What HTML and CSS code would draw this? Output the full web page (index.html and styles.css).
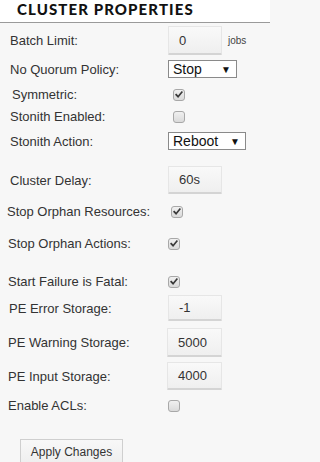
FILE: index.html
```html
<!DOCTYPE html>
<html>
<head>
<meta charset="utf-8">
<link rel="stylesheet" href="styles.css">
</head>
<body>
<div class="panel">
  <div class="header"><h1 class="title">CLUSTER PROPERTIES</h1></div>
  <div class="body">
    <div class="row r1 ind10"><span class="label">Batch Limit:</span><div class="ctl"><span class="input h29">0</span><span class="unit">jobs</span></div></div>
    <div class="row r2 ind10"><span class="label">No Quorum Policy:</span><div class="ctl"><span class="select w69">Stop<span class="arrow">&#9660;</span></span></div></div>
    <div class="row r3 ind12"><span class="label">Symmetric:</span><div class="ctl cb-ctl"><span class="checkbox checked"><svg viewBox="0 0 12 12" class="tick"><path d="M2.6 6.2 L4.9 8.6 L9.4 3.2" /></svg></span></div></div>
    <div class="row r4 ind10"><span class="label">Stonith Enabled:</span><div class="ctl cb-ctl"><span class="checkbox"></span></div></div>
    <div class="row r5 ind10"><span class="label">Stonith Action:</span><div class="ctl"><span class="select w78">Reboot<span class="arrow">&#9660;</span></span></div></div>
    <div class="row r6 ind10"><span class="label">Cluster Delay:</span><div class="ctl"><span class="input h28">60s</span></div></div>
    <div class="row r7 ind7"><span class="label">Stop Orphan Resources:</span><div class="ctl cb-ctl2"><span class="checkbox checked"><svg viewBox="0 0 12 12" class="tick"><path d="M2.6 6.2 L4.9 8.6 L9.4 3.2" /></svg></span></div></div>
    <div class="row r8 ind8"><span class="label">Stop Orphan Actions:</span><div class="ctl cb-ctl2"><span class="checkbox checked"><svg viewBox="0 0 12 12" class="tick"><path d="M2.6 6.2 L4.9 8.6 L9.4 3.2" /></svg></span></div></div>
    <div class="row r9 ind8"><span class="label">Start Failure is Fatal:</span><div class="ctl cb-ctl2"><span class="checkbox checked"><svg viewBox="0 0 12 12" class="tick"><path d="M2.6 6.2 L4.9 8.6 L9.4 3.2" /></svg></span></div></div>
    <div class="row r10 ind9"><span class="label">PE Error Storage:</span><div class="ctl"><span class="input h26">-1</span></div></div>
    <div class="row r11 ind8"><span class="label">PE Warning Storage:</span><div class="ctl ctl167"><span class="input h29 w55">5000</span></div></div>
    <div class="row r12 ind8"><span class="label">PE Input Storage:</span><div class="ctl ctl167"><span class="input h28 w55">4000</span></div></div>
    <div class="row r13 ind8"><span class="label">Enable ACLs:</span><div class="ctl cb-ctl2"><span class="checkbox"></span></div></div>
    <div class="actions"><span class="button">Apply Changes</span></div>
  </div>
</div>
</body>
</html>
```

FILE: styles.css
```css
html, body {
  margin: 0;
  padding: 0;
  background: #f7f7f7;
}
body {
  font-family: "Liberation Sans", Arial, sans-serif;
  color: #333;
  width: 270px;
  height: 462px;
  overflow: hidden;
}
.panel {
  display: flex;
  flex-direction: column;
}
.header {
  background: #fff;
  height: 22px;
  border-bottom: 1px solid #9a9a9a;
  display: flex;
  align-items: center;
  padding-left: 17px;
}
.title {
  margin: 0;
  font-family: "Lato", sans-serif;
  font-weight: 900;
  font-size: 15px;
  letter-spacing: 1.1px;
  color: #111;
  line-height: 1;
  position: relative;
  top: -2px;
}
.body {
  display: flex;
  flex-direction: column;
}
.row {
  display: flex;
  align-items: center;
}
.label {
  box-sizing: border-box;
  width: 168px;
  font-size: 13px;
  color: #333;
  line-height: 1;
}
.ind7 .label { width: 171px; padding-left: 7px; }
.ind8 .label { padding-left: 8px; }
.ind9 .label { padding-left: 9px; }
.ind10 .label { padding-left: 10px; }
.ind12 .label { padding-left: 12px; }
.ctl {
  display: flex;
  align-items: center;
}
.ctl167 { margin-left: -1px; }
.cb-ctl { padding-left: 5px; }
.cb-ctl2 { padding-left: 0; }

.r1 { margin-top: 3px; height: 29px; }
.r2 { margin-top: 5px; height: 18px; }
.r3 { margin-top: 10px; height: 13px; }
.r4 { margin-top: 9px; height: 13px; }
.r5 { margin-top: 9px; height: 18px; }
.r6 { margin-top: 16px; height: 28px; }
.r7 { margin-top: 11px; height: 13px; }
.r8 { margin-top: 19px; height: 13px; }
.r9 { margin-top: 25px; height: 13px; }
.r10 { margin-top: 7px; height: 26px; }
.r11 { margin-top: 7px; height: 29px; }
.r12 { margin-top: 5px; height: 28px; }
.r13 { margin-top: 9px; height: 13px; }

.input {
  box-sizing: border-box;
  width: 54px;
  display: flex;
  align-items: center;
  padding-left: 10px;
  font-size: 13px;
  color: #333;
  background: linear-gradient(#f9f9f9, #efefef);
  border: 1px solid #e6e6e6;
  border-bottom: 2px solid #d4d4d4;
  border-radius: 1px;
}
.h26 { height: 26px; }
.h28 { height: 28px; }
.h29 { height: 29px; }
.w55 { width: 55px; }
.unit {
  font-size: 10px;
  color: #444;
  margin-left: 6px;
}
.select {
  box-sizing: border-box;
  height: 18px;
  display: flex;
  align-items: center;
  justify-content: space-between;
  padding: 0 5px 0 4px;
  font-size: 14px;
  color: #111;
  background: #fff;
  border: 1px solid #8a8a8a;
}
.w69 { width: 69px; }
.w78 { width: 78px; }
.arrow {
  font-size: 10px;
  color: #111;
}
.checkbox {
  box-sizing: border-box;
  width: 12px;
  height: 12px;
  border: 1px solid #a8a8a8;
  border-radius: 3px;
  background: linear-gradient(#f0f0f0, #dadada);
  display: flex;
  align-items: center;
  justify-content: center;
}
.tick {
  width: 11px;
  height: 11px;
}
.tick path {
  fill: none;
  stroke: #3a3a3a;
  stroke-width: 2;
  stroke-linecap: square;
}
.actions {
  margin-top: 27px;
  padding-left: 20px;
  display: flex;
}
.button {
  box-sizing: border-box;
  width: 103px;
  height: 26px;
  display: flex;
  align-items: center;
  justify-content: center;
  font-size: 12px;
  color: #333;
  background: linear-gradient(#f8f8f8, #eeeeee);
  border: 1px solid #cfcfcf;
}
```
